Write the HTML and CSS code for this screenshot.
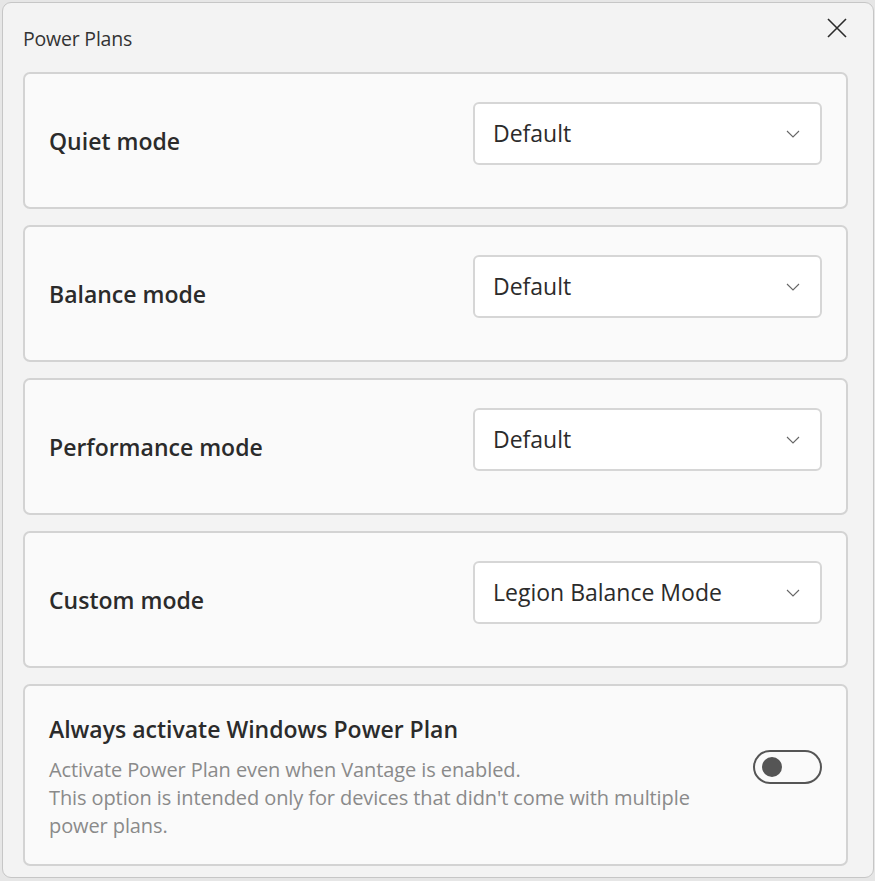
FILE: index.html
```html
<!DOCTYPE html>
<html lang="en">
<head>
<meta charset="UTF-8" />
<title>Power Plans</title>
<link rel="stylesheet" href="styles.css">
</head>
<body>

<div class="dialog">
  <div class="dialog-header">
    <span class="dialog-title">Power Plans</span>
    <button class="close-btn" aria-label="Close">
      <svg width="22" height="22" viewBox="0 0 22 22"><path d="M2 2 L20 20 M20 2 L2 20" stroke="#2b2b2b" stroke-width="1.6" fill="none"/></svg>
    </button>
  </div>

  <div class="card">
    <span class="card-label">Quiet mode</span>
    <div class="select"><span>Default</span><svg width="14" height="8" viewBox="0 0 14 8"><path d="M1 1 L7 7 L13 1" stroke="#666" stroke-width="1.1" fill="none"/></svg></div>
  </div>

  <div class="card">
    <span class="card-label">Balance mode</span>
    <div class="select"><span>Default</span><svg width="14" height="8" viewBox="0 0 14 8"><path d="M1 1 L7 7 L13 1" stroke="#666" stroke-width="1.1" fill="none"/></svg></div>
  </div>

  <div class="card">
    <span class="card-label">Performance mode</span>
    <div class="select"><span>Default</span><svg width="14" height="8" viewBox="0 0 14 8"><path d="M1 1 L7 7 L13 1" stroke="#666" stroke-width="1.1" fill="none"/></svg></div>
  </div>

  <div class="card">
    <span class="card-label">Custom mode</span>
    <div class="select"><span>Legion Balance Mode</span><svg width="14" height="8" viewBox="0 0 14 8"><path d="M1 1 L7 7 L13 1" stroke="#666" stroke-width="1.1" fill="none"/></svg></div>
  </div>

  <div class="card card-toggle">
    <div class="toggle-text">
      <div class="card-label">Always activate Windows Power Plan</div>
      <p class="desc">Activate Power Plan even when Vantage is enabled.<br>This option is intended only for devices that didn't come with multiple power plans.</p>
    </div>
    <div class="switch"><span class="knob"></span></div>
  </div>
</div>

</body>
</html>
```

FILE: styles.css
```css
body {
  margin: 0;
  background-color: #e6e6e6;
  font-family: "Open Sans", "Noto Sans", sans-serif;
  color: #2b2b2b;
}
.dialog {
  margin: 2px 1px 1px 2px;
  height: 876px;
  box-sizing: border-box;
  background-color: #f3f3f3;
  border: 1px solid #c6c6c6;
  border-radius: 9px;
  padding: 0 25px 0 20px;
  display: flex;
  flex-direction: column;
  gap: 16px;
}
.dialog-header {
  height: 53px;
  display: flex;
  justify-content: space-between;
  align-items: flex-start;
}
.dialog-title {
  font-size: 19.5px;
  color: #333;
  margin-top: 22px;
  letter-spacing: -0.2px;
}
.close-btn {
  background: none;
  border: none;
  padding: 0;
  margin: 14px -1px 0 0;
  width: 24px;
  height: 24px;
  cursor: pointer;
}
.card {
  background-color: #fafafa;
  border: 2px solid #d3d3d3;
  border-radius: 7px;
  height: 137px;
  box-sizing: border-box;
  display: flex;
  align-items: flex-start;
  justify-content: space-between;
  padding: 28px 24px 0 24px;
}
.card-label {
  font-size: 23px;
  font-weight: 600;
  color: #2b2b2b;
  padding-top: 28px;
  line-height: 22px;
}
.select {
  width: 349px;
  height: 63px;
  box-sizing: border-box;
  background-color: #fff;
  border: 2px solid #d6d6d6;
  border-radius: 6px;
  display: flex;
  align-items: center;
  justify-content: space-between;
  padding: 0 20px 0 18px;
  font-size: 23px;
  color: #2b2b2b;
}
.select span {
  margin-top: -2px;
}
.card-toggle {
  height: 182px;
  padding-top: 4px;
  align-items: center;
}
.card-toggle .card-label {
  padding-top: 0;
  line-height: 30px;
}
.desc {
  margin: 12px 0 0;
  font-size: 20px;
  line-height: 28px;
  color: #8a8a8a;
  width: 660px;
  letter-spacing: -0.1px;
}
.switch {
  width: 69px;
  height: 34px;
  box-sizing: border-box;
  border: 2px solid #555;
  border-radius: 17px;
  display: flex;
  align-items: center;
  padding-left: 7px;
  margin-top: -20px;
}
.knob {
  width: 20px;
  height: 20px;
  border-radius: 50%;
  background-color: #555;
}
```
